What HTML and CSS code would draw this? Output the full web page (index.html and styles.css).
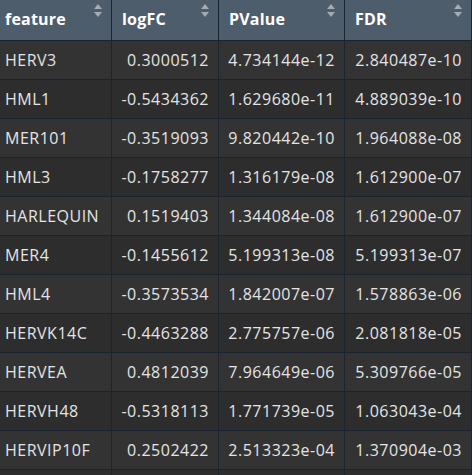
FILE: index.html
```html
<!DOCTYPE html>
<html>
<head>
<meta charset="utf-8">
<link rel="stylesheet" href="styles.css">
</head>
<body>
<div class="table">
  <div class="row head">
    <div class="cell">feature<svg class="sort" viewBox="0 0 8 13"><path d="M4 0 L8 5 L0 5 Z"/><path d="M0 8 L8 8 L4 13 Z"/></svg></div>
    <div class="cell">logFC<svg class="sort" viewBox="0 0 8 13"><path d="M4 0 L8 5 L0 5 Z"/><path d="M0 8 L8 8 L4 13 Z"/></svg></div>
    <div class="cell">PValue<svg class="sort" viewBox="0 0 8 13"><path d="M4 0 L8 5 L0 5 Z"/><path d="M0 8 L8 8 L4 13 Z"/></svg></div>
    <div class="cell">FDR<svg class="sort" viewBox="0 0 8 13"><path d="M4 0 L8 5 L0 5 Z"/><path d="M0 8 L8 8 L4 13 Z"/></svg></div>
  </div>
  <div class="row odd"><div class="cell">HERV3</div><div class="cell num">0.3000512</div><div class="cell num">4.734144e-12</div><div class="cell num">2.840487e-10</div></div>
  <div class="row even"><div class="cell">HML1</div><div class="cell num">-0.5434362</div><div class="cell num">1.629680e-11</div><div class="cell num">4.889039e-10</div></div>
  <div class="row odd"><div class="cell">MER101</div><div class="cell num">-0.3519093</div><div class="cell num">9.820442e-10</div><div class="cell num">1.964088e-08</div></div>
  <div class="row even"><div class="cell">HML3</div><div class="cell num">-0.1758277</div><div class="cell num">1.316179e-08</div><div class="cell num">1.612900e-07</div></div>
  <div class="row odd"><div class="cell">HARLEQUIN</div><div class="cell num">0.1519403</div><div class="cell num">1.344084e-08</div><div class="cell num">1.612900e-07</div></div>
  <div class="row even"><div class="cell">MER4</div><div class="cell num">-0.1455612</div><div class="cell num">5.199313e-08</div><div class="cell num">5.199313e-07</div></div>
  <div class="row odd"><div class="cell">HML4</div><div class="cell num">-0.3573534</div><div class="cell num">1.842007e-07</div><div class="cell num">1.578863e-06</div></div>
  <div class="row even"><div class="cell">HERVK14C</div><div class="cell num">-0.4463288</div><div class="cell num">2.775757e-06</div><div class="cell num">2.081818e-05</div></div>
  <div class="row odd"><div class="cell">HERVEA</div><div class="cell num">0.4812039</div><div class="cell num">7.964649e-06</div><div class="cell num">5.309766e-05</div></div>
  <div class="row even"><div class="cell">HERVH48</div><div class="cell num">-0.5318113</div><div class="cell num">1.771739e-05</div><div class="cell num">1.063043e-04</div></div>
  <div class="row odd"><div class="cell">HERVIP10F</div><div class="cell num">0.2502422</div><div class="cell num">2.513323e-04</div><div class="cell num">1.370904e-03</div></div>
  <div class="row even"><div class="cell"></div><div class="cell num"></div><div class="cell num"></div><div class="cell num"></div></div>
</div>
</body>
</html>
```

FILE: styles.css
```css
html, body {
  margin: 0;
  padding: 0;
  overflow: hidden;
  background: #2b2b2b;
}
.table {
  font-family: "Open Sans", "Noto Sans", sans-serif;
  font-size: 16px;
  letter-spacing: 0.5px;
  color: #e4e4e4;
  width: 472px;
}
.row {
  display: grid;
  grid-template-columns: 112px 107px 126px 127px;
  height: 39px;
  border-bottom: 1px solid #1a2531;
  box-sizing: border-box;
}
.row.head {
  height: 41px;
  background: #4e5d6c;
  color: #ffffff;
  font-weight: 700;
  letter-spacing: 0.2px;
}
.row.odd { background: #333333; }
.row.even { background: #2d2d2d; }
.cell {
  position: relative;
  display: flex;
  align-items: center;
  padding: 0 9px 0 10px;
  border-right: 1px solid #1a2531;
  white-space: nowrap;
  overflow: hidden;
}
.cell:first-child { padding-left: 5px; }
.cell.num { justify-content: flex-end; }
.head .cell { padding-bottom: 2px; }
.sort {
  position: absolute;
  top: 4px;
  right: 9px;
  width: 8px;
  height: 13px;
  fill: #a3abb3;
}
```
